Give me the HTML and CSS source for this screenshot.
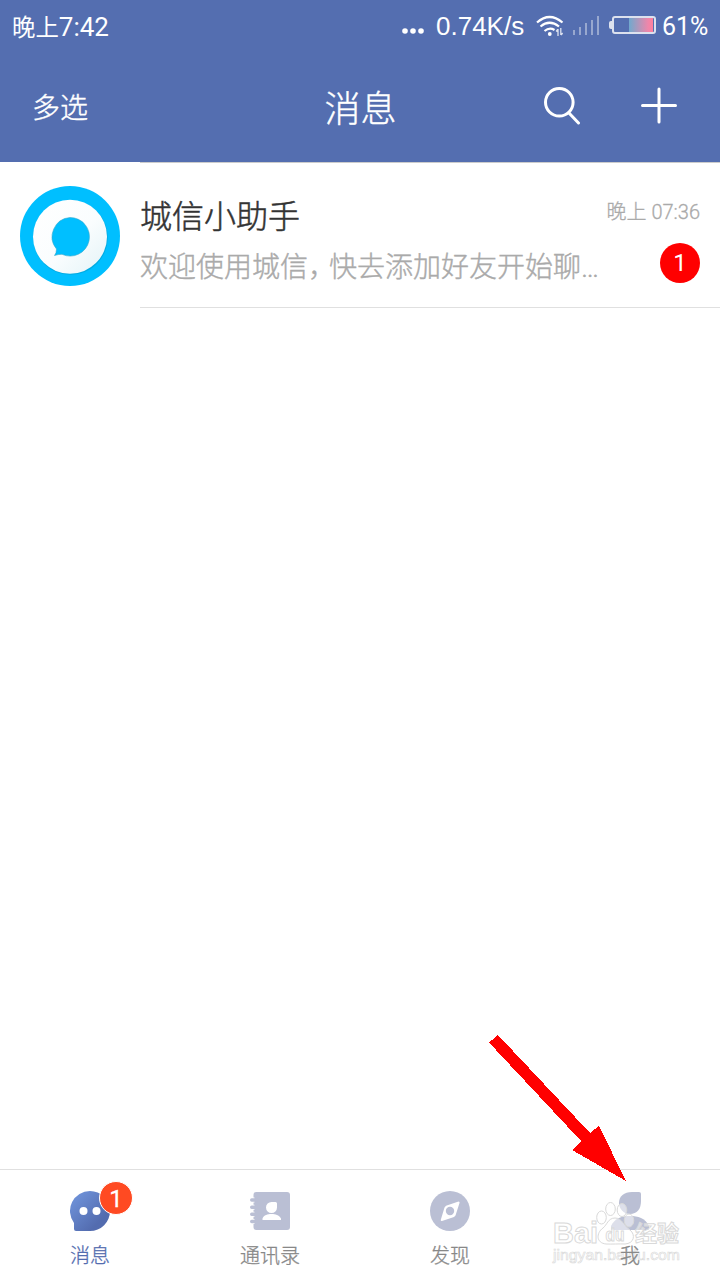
FILE: index.html
```html
<!DOCTYPE html>
<html lang="zh-CN">
<head>
  <meta charset="UTF-8">
  <meta name="viewport" content="width=device-width, initial-scale=1.0">
  <title>消息</title>
  <link rel="stylesheet" href="styles.css">
</head>
<body>
  <div class="app">
    <!-- 状态栏 -->
    <div class="status-bar">
      <div class="clock"><span class="cjk">晚上</span>7:42</div>
      <div class="status-right">
        <svg class="dots" width="22" height="6" viewBox="0 0 22 6">
          <circle cx="3" cy="3" r="2.8"/><circle cx="11" cy="3" r="2.8"/><circle cx="19" cy="3" r="2.8"/>
        </svg>
        <span class="speed">0.74K/s</span>
        <svg class="wifi" width="28" height="22" viewBox="0 0 28 22" fill="none" stroke="#fff" stroke-width="2.200">
          <path d="M1 7.500Q13.500-3.500 26.500 7.500"/>
          <path d="M4.500 11.500Q13.500 4 23 11.500"/>
          <path d="M8.500 16Q13.500 12 18.500 15"/>
          <circle cx="13.800" cy="19" r="1.900" fill="#fff" stroke="none"/>
          <path d="M22 14v7M24.800 13v7M20.200 16.500l1.500-2M26.600 18l-1.500 2" stroke-width="1.300" opacity=".8"/>
        </svg>
        <svg class="signal" width="27" height="20" viewBox="0 0 27 20" fill="#fff" opacity=".4">
          <rect x="0" y="14" width="2" height="5"/>
          <rect x="6" y="11" width="2" height="8"/>
          <rect x="12" y="7" width="2" height="12"/>
          <rect x="18" y="4" width="2" height="15"/>
          <rect x="24" y="0" width="2" height="19"/>
        </svg>
        <div class="battery"><div class="battery-level"></div></div>
        <span class="percent">61%</span>
      </div>
    </div>

    <!-- 标题栏 -->
    <header class="header">
      <div class="select">多选</div>
      <h1>消息</h1>
      <div class="actions">
        <svg width="38" height="38" viewBox="0 0 38 38" fill="none" stroke="#fff" stroke-width="3" stroke-linecap="round">
          <circle cx="15.300" cy="15.300" r="13.800"/>
          <path d="M25 26L34.500 36"/>
        </svg>
        <svg width="38" height="38" viewBox="0 0 38 38" fill="none" stroke="#fff" stroke-width="3" stroke-linecap="round">
          <path d="M19 2v33M2.500 18.500h33"/>
        </svg>
      </div>
    </header>

    <!-- 会话列表 -->
    <main class="list">
      <div class="chat">
        <svg class="avatar" width="100" height="100" viewBox="0 0 100 100">
          <defs>
            <linearGradient id="ring" x1="0" y1="0" x2="1" y2="1">
              <stop offset="0" stop-color="#fff"/>
              <stop offset=".55" stop-color="#fafdfe"/>
              <stop offset="1" stop-color="#e3f3f7"/>
            </linearGradient>
          </defs>
          <circle cx="50" cy="50" r="50" fill="#00bfff"/>
          <circle cx="50.500" cy="51.500" r="37.300" fill="#0098c8" opacity=".5"/>
          <circle cx="50" cy="50.700" r="37" fill="url(#ring)"/>
          <path d="M50 31.500a19.300 19.300 0 1 1-8 36.800q-4 0-7.500 1.200q2-2.500 2-6.500A19.300 19.300 0 0 1 50 31.500z" fill="#00bfff" stroke="#35a9cc" stroke-width=".6"/>
        </svg>
        <div class="chat-body">
          <div class="chat-text">
            <div class="name">城信小助手</div>
            <div class="preview">欢迎使用城信<span class="comma">，</span>快去添加好友开始聊…</div>
          </div>
          <div class="chat-meta">
            <div class="time">晚上 07:36</div>
            <div class="unread">1</div>
          </div>
        </div>
      </div>
    </main>

    <!-- 底部导航 -->
    <nav class="tabs">
      <div class="tab active">
        <div class="icon">
          <svg width="40" height="40" viewBox="0 0 40 40">
            <defs>
              <linearGradient id="bubble" x1="0" y1="0" x2="1" y2="1">
                <stop offset="0" stop-color="#7398e0"/>
                <stop offset=".75" stop-color="#536caf"/>
              </linearGradient>
            </defs>
            <path d="M20 0a20 20 0 0 1 0 40H6q-2 0-2-2v-6A20 20 0 0 1 20 0z" fill="url(#bubble)"/>
            <circle cx="13.500" cy="20" r="4" fill="#fff"/>
            <circle cx="26.500" cy="20" r="4" fill="#fff"/>
          </svg>
          <span class="badge">1</span>
        </div>
        <span>消息</span>
      </div>
      <div class="tab">
        <div class="icon">
          <svg width="40" height="40" viewBox="0 0 40 40" fill="#babfd4">
            <rect x="3.500" y="1" width="36.500" height="38" rx="3"/>
            <path d="M1 9h3.500M1 16.200h3.500M1 23.300h3.500M1 30.500h3.500" stroke="#fff" stroke-width="5"/>
            <path d="M1.700 9h5M1.700 16.200h5M1.700 23.300h5M1.700 30.500h5" stroke="#babfd4" stroke-width="3.400" stroke-linecap="round"/>
            <path d="M21.500 11h4q1.500 0 1.500 1.500v4a5.500 5.500 0 1 1-5.500-5.500zM12.500 29v-1.500c1.500-3.500 5-4.500 9-4.500s7.500 1 9.500 4.500V29z" fill="#fff"/>
          </svg>
        </div>
        <span>通讯录</span>
      </div>
      <div class="tab">
        <div class="icon">
          <svg width="40" height="40" viewBox="0 0 40 40">
            <circle cx="20" cy="20" r="20" fill="#babfd4"/>
            <path d="M28.500 10.500q1.500 0 1 1.500l-4 12.500-1.500 1.500-12 4q-1.500.3-1.200-1.200l3.700-12.300 1.500-1.700z" fill="#fff"/>
            <circle cx="20" cy="20" r="4.200" fill="#babfd4"/>
          </svg>
        </div>
        <span>发现</span>
      </div>
      <div class="tab">
        <div class="icon">
          <svg width="40" height="40" viewBox="0 0 40 40" fill="#babfd4">
            <path d="M22 1h7q2 0 2 2v7c0 8-4 13-11 13A11 11 0 0 1 9 12C9 5 14 1 22 1z"/>
            <path d="M1 38v-3C5 27 12 25 20 25S35 27 39 35v3q0 1-1 1H2q-1 0-1-1z"/>
          </svg>
        </div>
        <span class="me">我</span>
      </div>
    </nav>

    <!-- 水印 -->
    <svg class="watermark" width="140" height="70" viewBox="0 0 140 70">
      <g class="mark">
        <text x="2" y="41" font-size="30" textLength="45" lengthAdjust="spacingAndGlyphs">Bai</text>
        <path d="M64 16c-7 0-8 7-12 10-7 5-7 15 3 16 5 .3 14-.3 19 0 9-.5 11-9 5-14-6-4-8-12-15-12z"/>
        <ellipse cx="50.500" cy="15.500" rx="4.800" ry="6.500"/>
        <ellipse cx="59.500" cy="7" rx="4.800" ry="6.500"/>
        <ellipse cx="71" cy="8" rx="4.800" ry="6.500"/>
        <ellipse cx="78" cy="18.500" rx="4.800" ry="6.500"/>
        <text x="54.500" y="38.500" font-size="18" textLength="19" lengthAdjust="spacingAndGlyphs">du</text>
        <text class="cn" x="84" y="39" font-size="22" textLength="44">经验</text>
      </g>
      <text class="mark url" x="2" y="57.500" font-size="15" textLength="127" lengthAdjust="spacingAndGlyphs">jingyan.baidu.com</text>
    </svg>

    <!-- 箭头 -->
    <svg class="arrow" width="138" height="147" viewBox="0 0 138 147" fill="#f00">
      <path d="M0 7.500L9 0L101 98L110 91L137 146L83 115L92 106z" shape-rendering="crispEdges"/>
    </svg>
  </div>
</body>
</html>
```

FILE: styles.css
```css
* {
  box-sizing: border-box;
}

body {
  margin: 0;
  background: #fff;
  font-family: Roboto, "Noto Sans CJK SC", sans-serif;
  font-weight: 300;
}

svg {
  display: block;
}

.app {
  position: relative;
  width: 720px;
  height: 1280px;
  display: flex;
  flex-direction: column;
  overflow: hidden;
}

/* 状态栏 */
.status-bar {
  height: 50px;
  padding: 2px 12px 0 12px;
  display: flex;
  justify-content: space-between;
  align-items: center;
  background: #546eb0;
  color: #fff;
  font-size: 26px;
  font-weight: 400;
}

.clock .cjk {
  font-size: 23.4px;
}

.status-right {
  display: flex;
  align-items: center;
}

.dots {
  fill: #fff;
  margin: 9px 12px 0 0;
}

.speed {
  width: 90px;
  font-family: "Liberation Sans", sans-serif;
}

.wifi {
  margin: 0 9px 0 10px;
}

.signal {
  margin-right: 12px;
}

.battery {
  position: relative;
  width: 44px;
  height: 18px;
  padding: 1px;
  margin-right: 6px;
  margin-top: -2px;
  border: 2px solid #dce1ee;
  border-radius: 3px;
}

.battery::before {
  content: "";
  position: absolute;
  left: -5px;
  top: 3px;
  width: 3px;
  height: 8px;
  background: #dce1ee;
  border-radius: 2px 0 0 2px;
}

.battery-level {
  width: 24px;
  height: 14px;
  margin: -1px 0 0 auto;
  background: linear-gradient(to right, #71a9ce, #ef86aa 80%, #ff7f9e);
}

.percent {
  width: 46px;
  font-size: 25px;
}

/* 标题栏 */
.header {
  height: 112px;
  padding: 0 42px 0 32px;
  display: grid;
  grid-template-columns: 1fr auto 1fr;
  align-items: center;
  background: #546eb0;
  color: #fff;
}

.header h1 {
  margin: 0 0 0 11px;
  font-size: 36px;
  font-weight: 300;
  -webkit-text-stroke: 0.4px;
}

.select {
  font-size: 28px;
  -webkit-text-stroke: 0.4px;
}

.actions {
  display: flex;
  justify-content: flex-end;
  gap: 58px;
}

/* 会话列表 */
.list {
  flex: 1;
}

.chat {
  height: 146px;
  padding-left: 20px;
  display: flex;
  gap: 20px;
}

.avatar {
  margin-top: 24px;
}

.chat-body {
  flex: 1;
  padding: 0 20px 0 0;
  display: flex;
  justify-content: space-between;
  border-top: 1px solid #ccc;
  border-bottom: 1px solid #e0e0e0;
}

.name {
  margin-top: 30px;
  line-height: 48px;
  font-size: 32px;
  color: #333;
  -webkit-text-stroke: 0.5px;
}

.preview {
  margin-top: 6px;
  line-height: 42px;
  font-size: 28px;
  color: #aaa;
  white-space: nowrap;
  -webkit-text-stroke: 0.4px;
}

.comma {
  letter-spacing: -7px;
}

.chat-meta {
  display: flex;
  flex-direction: column;
  align-items: flex-end;
}

.time {
  margin-top: 35px;
  line-height: 28px;
  font-size: 20px;
  color: #aaa;
  -webkit-text-stroke: 0.3px;
}

.unread {
  width: 40px;
  height: 40px;
  margin-top: 17px;
  border-radius: 50%;
  background: #f00;
  color: #fff;
  font-size: 24px;
  font-weight: 400;
  line-height: 40px;
  text-align: center;
}

/* 底部导航 */
.tabs {
  height: 111px;
  padding-top: 21px;
  display: grid;
  grid-template-columns: repeat(4, 1fr);
  border-top: 1px solid #e0e0e0;
}

.tab {
  display: flex;
  flex-direction: column;
  align-items: center;
  gap: 10px;
  color: #888;
  font-size: 20px;
  line-height: 30px;
  -webkit-text-stroke: 0.3px;
}

.active {
  color: #536caf;
}

.me {
  position: relative;
  z-index: 1;
}

.icon {
  position: relative;
}

.badge {
  position: absolute;
  left: 29px;
  top: -10px;
  width: 34px;
  height: 34px;
  border: 1px solid #fff;
  border-radius: 50%;
  background: #ff4a22;
  color: #fff;
  font-size: 24px;
  font-weight: 400;
  line-height: 34px;
  text-align: center;
}

/* 水印 */
.watermark {
  position: absolute;
  left: 551px;
  top: 1202px;
}

.mark {
  fill: rgba(255, 255, 255, 0.5);
  stroke: #d9d9d9;
  stroke-width: 1px;
  font-family: "Liberation Sans", sans-serif;
  font-weight: 700;
}

.mark .cn {
  font-family: "Noto Sans CJK SC", sans-serif;
}

.url {
  font-weight: 400;
  stroke-width: 0.6px;
}

/* 箭头 */
.arrow {
  position: absolute;
  left: 489px;
  top: 1035px;
}
```
